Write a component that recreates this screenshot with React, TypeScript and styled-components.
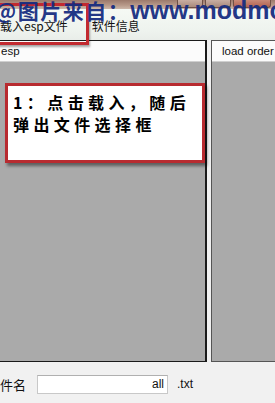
import React from "react";
import styled, { createGlobalStyle } from "styled-components";

const Global = createGlobalStyle`
  html, body { margin: 0; padding: 0; background: #f0f0f0; }
  body { font-family: "Liberation Sans", "Noto Sans CJK SC", sans-serif; }
`;

const Window = styled.div`
  position: relative;
  width: 275px;
  height: 403px;
  overflow: hidden;
  display: flex;
  flex-direction: column;
  background: #f0f0f0;
`;

const TitleBar = styled.div`
  height: 9px;
  flex: none;
  display: flex;
  justify-content: flex-end;
  align-items: flex-start;
  gap: 2px;
  padding-right: 4px;
  background: linear-gradient(180deg, #9c7a6c 0%, #b89a8a 60%, #cdb8aa 100%);
`;

const CtrlButton = styled.div<{ $w: number; $red?: boolean }>`
  width: ${(p) => p.$w}px;
  height: 7px;
  border: 1px solid #6e5046;
  border-top: none;
  border-radius: 0 0 3px 3px;
  background: ${(p) =>
    p.$red
      ? "linear-gradient(180deg, #c98a78, #b26250)"
      : "linear-gradient(180deg, #c9aea2, #a98a7c)"};
`;

const Watermark = styled.div`
  position: absolute;
  top: -5px;
  left: -5px;
  white-space: nowrap;
  color: rgba(22, 44, 128, 0.95);
  font-weight: 700;
  pointer-events: none;
  z-index: 5;
`;

const MarkCjk = styled.span`
  font-family: "Noto Sans CJK SC", sans-serif;
  font-size: 21px;
  letter-spacing: 1.5px;
`;

const MarkLatin = styled.span`
  font-family: "Liberation Sans", sans-serif;
  font-size: 25px;
`;

const MenuBar = styled.div`
  height: 31px;
  flex: none;
  display: flex;
  align-items: flex-start;
  padding-top: 9px;
  box-sizing: border-box;
  gap: 24px;
  background: linear-gradient(180deg, #f5f9f4 0%, #eef3ee 70%, #e9ede9 100%);
  position: relative;
`;

const MenuItem = styled.div`
  font-family: "Noto Sans CJK SC", sans-serif;
  font-size: 12px;
  line-height: 16px;
  color: #111;
  &:first-child { margin-left: 5px; }
`;

const MenuHighlight = styled.div`
  position: absolute;
  left: -10px;
  top: -6px;
  width: 93px;
  height: 36px;
  border: 3px solid #c22a30;
  box-shadow: 1px 2px 2px rgba(0, 0, 0, 0.35);
  z-index: 4;
`;

const Panels = styled.div`
  height: 322px;
  flex: none;
  display: flex;
  gap: 4px;
  margin-left: -4px;
`;

const Panel = styled.div<{ $w: number; $dark?: boolean }>`
  width: ${(p) => p.$w}px;
  flex: none;
  display: flex;
  flex-direction: column;
  border: 1px solid ${(p) => (p.$dark ? "#1a1a1a" : "#555")};
  border-right-width: ${(p) => (p.$dark ? 2 : 1)}px;
  box-sizing: border-box;
  background: #aaaaaa;
`;

const PanelHeader = styled.div<{ $pad: number }>`
  height: 21px;
  flex: none;
  box-sizing: border-box;
  padding-left: ${(p) => p.$pad}px;
  background: #fbfbfb;
  border-bottom: 1px solid #cfcfcf;
  font-size: 11.5px;
  line-height: 21px;
  color: #111;
  white-space: nowrap;
  overflow: hidden;
`;

const PanelBody = styled.div`
  flex: 1;
  background: #aaaaaa;
`;

const Callout = styled.div`
  position: absolute;
  left: 5px;
  top: 83px;
  width: 200px;
  height: 80px;
  box-sizing: border-box;
  border: 3px solid #b82b30;
  background: #ffffff;
  box-shadow: 2px 3px 3px rgba(0, 0, 0, 0.45);
  padding: 5px 0 0 5px;
  font-family: "Noto Sans CJK SC", sans-serif;
  font-weight: 700;
  font-size: 16px;
  line-height: 22px;
  letter-spacing: 4.4px;
  color: #000;
  z-index: 3;
`;

const CalloutLine = styled.div`
  white-space: nowrap;
`;

const BottomRow = styled.div`
  flex: 1;
  display: flex;
  align-items: center;
  padding-top: 3px;
  background: #f1f1f1;
`;

const Label = styled.div`
  font-family: "Noto Sans CJK SC", sans-serif;
  font-size: 13px;
  color: #111;
  margin-left: -13px;
  width: 50px;
  flex: none;
`;

const Input = styled.div`
  width: 131px;
  height: 19px;
  box-sizing: border-box;
  border: 1px solid #c8c8c8;
  border-top-color: #b0b0b0;
  background: #fff;
  font-size: 12px;
  line-height: 17px;
  text-align: right;
  padding-right: 3px;
  color: #111;
  flex: none;
`;

const Ext = styled.div`
  margin-left: 9px;
  font-size: 12px;
  color: #111;
`;

export default function App() {
  return (
    <>
      <Global />
      <Window>
        <Watermark>
          <MarkCjk>@图片来自：</MarkCjk>
          <MarkLatin>www.modmod</MarkLatin>
        </Watermark>
        <TitleBar>
          <CtrlButton $w={24} />
          <CtrlButton $w={24} />
          <CtrlButton $w={36} $red />
        </TitleBar>
        <MenuBar>
          <MenuHighlight />
          <MenuItem>载入esp文件</MenuItem>
          <MenuItem>软件信息</MenuItem>
        </MenuBar>
        <Panels>
          <Panel $w={211} $dark>
            <PanelHeader $pad={4}>esp</PanelHeader>
            <PanelBody />
          </Panel>
          <Panel $w={70}>
            <PanelHeader $pad={10}>load order</PanelHeader>
            <PanelBody />
          </Panel>
        </Panels>
        <Callout>
          <CalloutLine>1：点击载入，随后</CalloutLine>
          <CalloutLine>弹出文件选择框</CalloutLine>
        </Callout>
        <BottomRow>
          <Label>文件名</Label>
          <Input>all</Input>
          <Ext>.txt</Ext>
        </BottomRow>
      </Window>
    </>
  );
}
